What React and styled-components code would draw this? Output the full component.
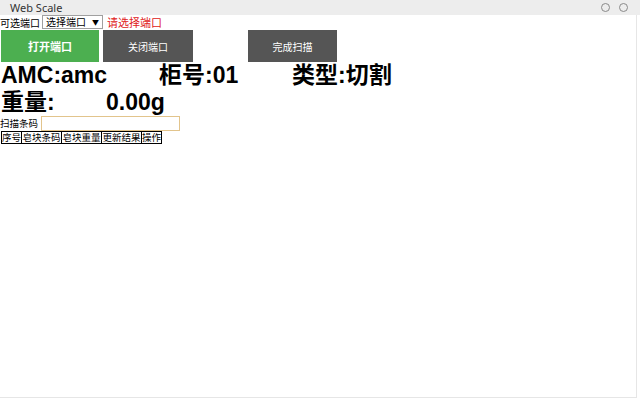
import React from "react";
import styled, { createGlobalStyle } from "styled-components";

const Global = createGlobalStyle`
  html, body { margin: 0; padding: 0; background: #fff; }
  body {
    font-family: "Noto Sans CJK SC", "Noto Sans", sans-serif;
    color: #000;
    width: 640px;
    height: 400px;
    overflow: hidden;
  }
`;

const Window = styled.div`
  width: 640px;
  height: 400px;
  display: flex;
  flex-direction: column;
  background: #fff;
`;

const TitleBar = styled.div`
  height: 15px;
  flex: 0 0 15px;
  background: #ededed;
  display: flex;
  align-items: center;
  padding: 0 12px 0 10px;
  font-family: "Noto Sans", "Liberation Sans", sans-serif;
  font-size: 11px;
  color: #333;
`;

const Title = styled.span`
  flex: 1;
  line-height: 15px;
`;

const WinDot = styled.span`
  width: 7px;
  height: 7px;
  border: 1px solid #8a8a8a;
  border-radius: 50%;
  margin-left: 9px;
`;

const Content = styled.div`
  flex: 1;
  margin-right: 3px;
  margin-bottom: 2px;
  border-right: 1px solid #e6e6e6;
  border-bottom: 1px solid #e6e6e6;
  display: flex;
  flex-direction: column;
`;

const PortRow = styled.div`
  display: flex;
  align-items: center;
  height: 14px;
  font-size: 10px;
  line-height: 12px;
`;

const Label = styled.span`
  font-size: ${(p) => p.$size || 10}px;
  line-height: 13px;
  color: ${(p) => p.$color || "#000"};
  margin-right: ${(p) => p.$gap || 0}px;
  white-space: nowrap;
`;

const Select = styled.div`
  margin: 0 4px 0 2px;
  width: 53px;
  height: 12px;
  border: 1px solid #a0a0a0;
  display: flex;
  align-items: center;
  justify-content: space-between;
  padding: 0 3px 0 3px;
  box-sizing: content-box;
  font-size: 10px;
  line-height: 12px;
`;

const Caret = styled.span`
  font-size: 7px;
`;

const ButtonRow = styled.div`
  display: flex;
  margin-top: 1px;
  padding-left: 1px;
`;

const Button = styled.div`
  width: ${(p) => p.$w}px;
  height: 32px;
  margin-left: ${(p) => p.$gap || 0}px;
  background: ${(p) => p.$bg};
  color: #fff;
  display: flex;
  align-items: center;
  justify-content: center;
  font-size: ${(p) => (p.$bold ? 11 : 10)}px;
  font-weight: ${(p) => (p.$bold ? 700 : 400)};
`;

const InfoRow = styled.div`
  display: flex;
  height: 27px;
  align-items: center;
  padding-left: 1px;
  font-family: "Liberation Sans", "Noto Sans CJK SC", sans-serif;
  font-size: 23px;
  line-height: 27px;
  font-weight: 700;
  white-space: nowrap;
`;

const Field = styled.span`
  width: ${(p) => p.$w}px;
  flex: 0 0 ${(p) => p.$w}px;
`;

const ScanRow = styled.div`
  display: flex;
  align-items: center;
  height: 15px;
`;

const ScanInput = styled.div`
  width: 137px;
  height: 13px;
  border: 1px solid #e2c48c;
`;

const HeadRow = styled.div`
  display: flex;
  padding-left: 1px;
`;

const HeadCell = styled.div`
  width: ${(p) => p.$w}px;
  height: 11px;
  border: 1px solid #000;
  margin-right: -1px;
  font-size: 9.5px;
  line-height: 11px;
  text-align: center;
  white-space: nowrap;
  overflow: hidden;
`;

const heads = [
  ["序号", 19],
  ["皂块条码", 39],
  ["皂块重量", 39],
  ["更新结果", 39],
  ["操作", 19],
];

export default function App() {
  return (
    <>
      <Global />
      <Window>
        <TitleBar>
          <Title>Web Scale</Title>
          <WinDot />
          <WinDot />
        </TitleBar>
        <Content>
          <PortRow>
            <Label>可选端口</Label>
            <Select>
              <span>选择端口</span>
              <Caret>▼</Caret>
            </Select>
            <Label $size={11} $color="#e02020">请选择端口</Label>
          </PortRow>
          <ButtonRow>
            <Button $w={98} $bg="#4caf50" $bold>打开端口</Button>
            <Button $w={90} $gap={4} $bg="#555555">关闭端口</Button>
            <Button $w={89} $gap={55} $bg="#555555">完成扫描</Button>
          </ButtonRow>
          <InfoRow>
            <Field $w={158}>AMC:amc</Field>
            <Field $w={133}>柜号:01</Field>
            <Field $w={120}>类型:切割</Field>
          </InfoRow>
          <InfoRow>
            <Field $w={105}>重量:</Field>
            <Field $w={100}>0.00g</Field>
          </InfoRow>
          <ScanRow>
            <Label $size={9.5} $gap={3}>扫描条码</Label>
            <ScanInput />
          </ScanRow>
          <HeadRow>
            {heads.map(([t, w]) => (
              <HeadCell key={t} $w={w}>{t}</HeadCell>
            ))}
          </HeadRow>
        </Content>
      </Window>
    </>
  );
}
